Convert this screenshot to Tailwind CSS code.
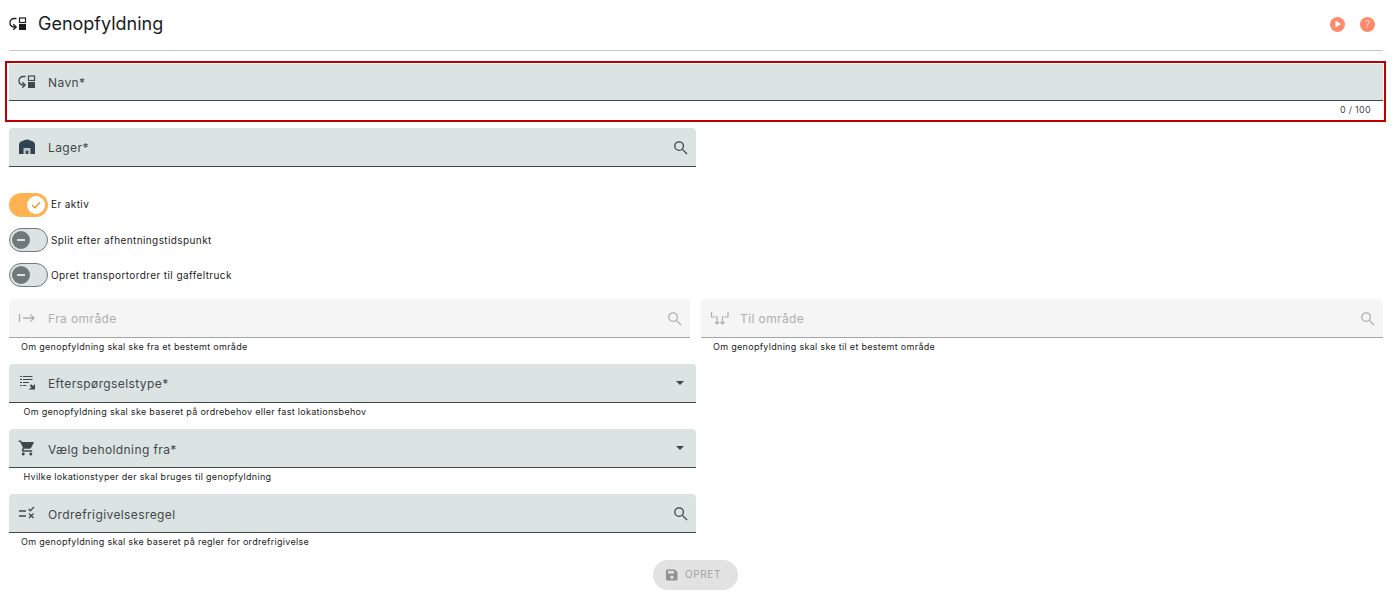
<!DOCTYPE html>
<html lang="en">
<head>
  <meta charset="UTF-8" />
  <title>Genopfyldning</title>
  <script src="https://cdn.jsdelivr.net/npm/@tailwindcss/browser@4"></script>
</head>
<body class="bg-white font-['Inter',sans-serif] text-[#1a1c1e] overflow-hidden">
  <main class="w-[1392px] h-[598px] px-[9px] flex flex-col">
    <!-- header -->
    <header class="h-[51px] shrink-0 flex items-center border-b border-[#c0c8c8] pb-[2px]">
      <svg class="w-[18px] h-[18px] mr-[11px]" viewBox="0 0 18 18" fill="none">
        <path d="M7.500 3.500H5A4 4 0 0 0 1 7.500 4.500 4.500 0 0 0 4.500 12H7" stroke="#1a1c1e" stroke-width="1.300"/>
        <path d="M4.300 9.200 7.200 12 4.300 14.800" stroke="#1a1c1e" stroke-width="1.300"/>
        <rect x="10.500" y="3" width="6" height="4.500" stroke="#1a1c1e" stroke-width="1.200"/>
        <rect x="10" y="9" width="7" height="6" fill="#1a1c1e"/>
      </svg>
      <h1 class="text-[18px] leading-[24px] font-normal">Genopfyldning</h1>
      <div class="ml-auto flex items-center gap-[15px] pr-[8px]">
        <span class="w-[15px] h-[15px] rounded-full bg-[#ff8a6b] flex items-center justify-center">
          <svg class="w-[8px] h-[8px]" viewBox="0 0 8 8"><path d="M1.500 .5 7 4 1.500 7.500Z" fill="#fff"/></svg>
        </span>
        <span class="w-[15px] h-[15px] rounded-full bg-[#ff8a6b] text-[#ffd9cc] text-[11px] leading-[15px] text-center">?</span>
      </div>
    </header>

    <!-- navn, highlighted -->
    <section class="mt-[10px] -ml-[4px] -mr-[3px] pl-[2px] pr-[1px] pt-[1px] h-[61px] shrink-0 border-2 border-[#c00000]">
      <div class="h-[37px] bg-[#dce3e3] border-b border-[#41484a] flex items-center pl-[9px] pr-[12px]">
        <svg class="w-[18px] h-[18px] mr-[12px]" viewBox="0 0 18 18" fill="none">
          <path d="M7.500 3.500H5A4 4 0 0 0 1 7.500 4.500 4.500 0 0 0 4.500 12H7" stroke="#41484a" stroke-width="1.300"/>
          <path d="M4.300 9.200 7.200 12 4.300 14.800" stroke="#41484a" stroke-width="1.300"/>
          <rect x="10.500" y="3" width="6" height="4.500" stroke="#41484a" stroke-width="1.200"/>
          <rect x="10" y="9" width="7" height="6" fill="#41484a"/>
        </svg>
        <span class="text-[12px] tracking-[.4px] text-[#41484a] pt-[1px]">Navn*</span>
      </div>
      <div class="text-right pr-[12px] pt-[2px] text-[9px] leading-[14px] tracking-[.3px] text-[#41484a]">0 / 100</div>
    </section>

    <!-- lager -->
    <div class="mt-[6px] w-[687px] h-[39px] shrink-0 bg-[#dce3e3] rounded-t-[4px] border-b border-[#41484a] flex items-center pl-[9px] pr-[8px]">
      <svg class="w-[18px] h-[18px] mr-[12px]" viewBox="0 0 18 18"><path d="M1 16V6.500Q1 4.500 3 3.600L7.500 1.800Q9 1.300 10.500 1.800L15 3.600Q17 4.500 17 6.500V16Z" fill="#2f4350"/><rect x="5.500" y="10" width="7" height="6" fill="#b9c3c6"/><rect x="7.800" y="12.800" width="2.400" height="3.200" fill="#2f4350"/></svg>
      <span class="text-[12px] tracking-[.4px] text-[#41484a] pt-[1px]">Lager*</span>
      <svg class="ml-auto w-[15px] h-[15px]" viewBox="0 0 16 16" fill="none" stroke="#41484a" stroke-width="1.4"><circle cx="6.500" cy="6.500" r="4.600"/><path d="m10 10 5 5"/></svg>
    </div>

    <!-- toggles -->
    <div class="mt-[26px] flex flex-col gap-[11px] shrink-0">
      <label class="flex items-center h-[24px] gap-[3px] text-[10px] tracking-[.4px]">
        <span class="w-[39px] h-[24px] rounded-full bg-[#ffb251] flex items-center justify-end pr-[3px]">
          <span class="w-[18px] h-[18px] rounded-full bg-white flex items-center justify-center">
            <svg class="w-[10px] h-[10px]" viewBox="0 0 10 10" fill="none" stroke="#f57c00" stroke-width="1.2"><path d="m1.200 5.200 2.600 2.600 5-5.400"/></svg>
          </span>
        </span>
        <span class="-mt-[2px]">Er aktiv</span>
      </label>
      <label class="flex items-center h-[24px] gap-[3px] text-[10px] tracking-[.4px]">
        <span class="w-[39px] h-[24px] rounded-full bg-[#dce3e3] border border-[#71787a] flex items-center pl-[2px]">
          <span class="w-[18px] h-[18px] rounded-full bg-[#71787a] flex items-center justify-center"><span class="w-[8px] h-[1.5px] bg-[#dce3e3]"></span></span>
        </span>
        Split efter afhentningstidspunkt
      </label>
      <label class="flex items-center h-[24px] gap-[3px] text-[10px] tracking-[.4px]">
        <span class="w-[39px] h-[24px] rounded-full bg-[#dce3e3] border border-[#71787a] flex items-center pl-[2px]">
          <span class="w-[18px] h-[18px] rounded-full bg-[#71787a] flex items-center justify-center"><span class="w-[8px] h-[1.5px] bg-[#dce3e3]"></span></span>
        </span>
        Opret transportordrer til gaffeltruck
      </label>
    </div>

    <!-- fra / til -->
    <div class="mt-[12px] flex gap-[11px] shrink-0">
      <div class="w-[681px]">
        <div class="h-[39px] bg-[#f5f5f5] rounded-t-[4px] border-b border-[#a3a5a6] flex items-center pl-[9px] pr-[8px]">
          <svg class="w-[18px] h-[18px] mr-[12px]" viewBox="0 0 18 18" fill="none" stroke="#adafb0" stroke-width="1.300"><path d="M1.500 5v8M5 9h11M12.300 5.400 16 9l-3.700 3.600"/></svg>
          <span class="text-[12px] tracking-[.4px] text-[#adafb0] pt-[1px]">Fra område</span>
          <svg class="ml-auto w-[15px] h-[15px]" viewBox="0 0 16 16" fill="none" stroke="#adafb0" stroke-width="1.4"><circle cx="6.500" cy="6.500" r="4.600"/><path d="m10 10 5 5"/></svg>
        </div>
        <p class="pl-[12px] pt-[2px] text-[9px] leading-[14px] tracking-[.3px]">Om genopfyldning skal ske fra et bestemt område</p>
      </div>
      <div class="w-[682px]">
        <div class="h-[39px] bg-[#f5f5f5] rounded-t-[4px] border-b border-[#a3a5a6] flex items-center pl-[9px] pr-[8px]">
          <svg class="w-[20px] h-[18px] mr-[10px]" viewBox="0 0 20 18" fill="none" stroke="#adafb0" stroke-width="1.200"><path d="M1.500 3V8H5.500M7 7V15M4.800 12.800 7 15 9.200 12.800M18 3V8H14M12.500 7V15M10.300 12.800 12.500 15 14.700 12.800"/></svg>
          <span class="text-[12px] tracking-[.4px] text-[#adafb0] pt-[1px]">Til område</span>
          <svg class="ml-auto w-[15px] h-[15px]" viewBox="0 0 16 16" fill="none" stroke="#adafb0" stroke-width="1.4"><circle cx="6.500" cy="6.500" r="4.600"/><path d="m10 10 5 5"/></svg>
        </div>
        <p class="pl-[12px] pt-[2px] text-[9px] leading-[14px] tracking-[.3px]">Om genopfyldning skal ske til et bestemt område</p>
      </div>
    </div>

    <!-- efterspørgselstype -->
    <div class="mt-[10px] w-[687px] shrink-0">
      <div class="h-[39px] bg-[#dce3e3] rounded-t-[4px] border-b border-[#41484a] flex items-center pl-[9px] pr-[12px]">
        <svg class="w-[18px] h-[18px] mr-[12px]" viewBox="0 0 18 18" fill="none" stroke="#41484a" stroke-width="1"><path d="M5 2.500h9.500M2 2.500h2M5 5.500h9.500M2 5.500h2M5 8.500h6M2 8.500h2M5 11.500h3M2 11.500h2"/><path d="M10.500 15.500h6.500v-5.500l-2 2-1.800-1.700-1.500 1.500 1.800 1.700Z" fill="#41484a" stroke="none"/></svg>
        <span class="text-[12px] tracking-[.4px] text-[#41484a] pt-[1px]">Efterspørgselstype*</span>
        <span class="ml-auto border-x-[4.5px] border-t-[4.5px] border-x-transparent border-t-[#41484a]"></span>
      </div>
      <p class="pl-[14.500px] pt-[2px] text-[9px] leading-[14px] tracking-[.3px]">Om genopfyldning skal ske baseret på ordrebehov eller fast lokationsbehov</p>
    </div>

    <!-- vælg beholdning -->
    <div class="mt-[10px] w-[687px] shrink-0">
      <div class="h-[39px] bg-[#dce3e3] rounded-t-[4px] border-b border-[#41484a] flex items-center pl-[9px] pr-[12px]">
        <svg class="w-[18px] h-[18px] mr-[12px]" viewBox="0 0 24 24"><path fill="#41484a" d="M7 18c-1.100 0-1.990.9-1.990 2S5.900 22 7 22s2-.9 2-2-.9-2-2-2zM1 2v2h2l3.600 7.590-1.350 2.450c-.16.28-.25.61-.25.96 0 1.100.9 2 2 2h12v-2H7.420c-.14 0-.25-.11-.25-.25l.03-.12.9-1.630h7.450c.75 0 1.410-.41 1.750-1.030l3.580-6.490A1 1 0 0 0 20.010 4H5.210l-.94-2H1zm16 16c-1.100 0-1.990.9-1.990 2s.89 2 1.990 2 2-.9 2-2-.9-2-2-2z"/></svg>
        <span class="text-[12px] tracking-[.4px] text-[#41484a] pt-[3px]">Vælg beholdning fra*</span>
        <span class="ml-auto border-x-[4.5px] border-t-[4.5px] border-x-transparent border-t-[#41484a]"></span>
      </div>
      <p class="pl-[14.500px] pt-[2px] text-[9px] leading-[14px] tracking-[.3px]">Hvilke lokationstyper der skal bruges til genopfyldning</p>
    </div>

    <!-- ordrefrigivelsesregel -->
    <div class="mt-[10px] w-[687px] shrink-0">
      <div class="h-[39px] bg-[#dce3e3] rounded-t-[4px] border-b border-[#41484a] flex items-center pl-[9px] pr-[8px]">
        <svg class="w-[18px] h-[18px] mr-[12px]" viewBox="0 0 18 18" fill="none" stroke="#41484a" stroke-width="1.300"><path d="M1 7h7M1 12h7M10.500 5l1.800 1.800L16 3M11 9.500l4.500 4.500M15.500 9.500 11 14"/></svg>
        <span class="text-[12px] tracking-[.4px] text-[#41484a] pt-[3px]">Ordrefrigivelsesregel</span>
        <svg class="ml-auto w-[15px] h-[15px]" viewBox="0 0 16 16" fill="none" stroke="#41484a" stroke-width="1.4"><circle cx="6.500" cy="6.500" r="4.600"/><path d="m10 10 5 5"/></svg>
      </div>
      <p class="pl-[12px] pt-[2px] text-[9px] leading-[14px] tracking-[.3px]">Om genopfyldning skal ske baseret på regler for ordrefrigivelse</p>
    </div>

    <!-- opret -->
    <div class="mt-[11px] flex justify-center pr-[1px] shrink-0">
      <button disabled class="w-[85px] h-[30px] rounded-full bg-[#e2e2e2] flex items-center pl-[13px] pb-[1px] gap-[7px] text-[10px] tracking-[.6px] text-[#a0a2a3]">
        <svg class="w-[12px] h-[12px]" viewBox="0 0 12 12"><path fill="#8f9192" d="M1.500 .5h7.300L11.500 3.200V10a1.500 1.500 0 0 1-1.500 1.500H1.500A1.500 1.500 0 0 1 0 10V2A1.500 1.500 0 0 1 1.500 .5ZM2 2v2.500h6V2ZM6 6.500a1.700 1.700 0 1 0 0 3.400 1.700 1.700 0 0 0 0-3.400Z" fill-rule="evenodd"/></svg>
        OPRET
      </button>
    </div>
  </main>
</body>
</html>
